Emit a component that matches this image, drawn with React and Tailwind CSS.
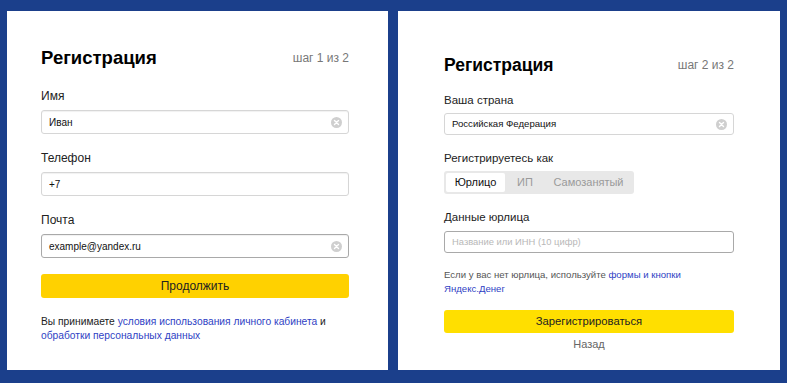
import React from 'react';

const font = { fontFamily: '"Liberation Sans", Arial, sans-serif' };

function ClearIcon() {
    return (
        <svg width="11" height="11" viewBox="0 0 12 12" className="shrink-0">
            <circle cx="6" cy="6" r="6" fill="#cfcfcf" />
            <path d="M3.8 3.8 L8.2 8.2 M8.2 3.8 L3.8 8.2" stroke="#fff" strokeWidth="1.5" strokeLinecap="round" />
        </svg>
    );
}

function Field({ label, value, clear, dark, first }) {
    return (
        <div className={first ? '' : 'mt-[16px]'}>
            <div className="text-[12px] leading-[16px] text-[#222]">{label}</div>
            <div className={`mt-[6px] h-[24px] flex items-center justify-between rounded-[3px] border bg-white pl-[7px] pr-[6px] shadow-[inset_0_1px_1px_rgba(0,0,0,0.06)] ${dark ? 'border-[#a9a9a9]' : 'border-[#d6d6d6]'}`}>
                <span className="text-[10px] text-[#111]">{value}</span>
                {clear && <ClearIcon />}
            </div>
        </div>
    );
}

function StepOne() {
    return (
        <div className="w-[381px] h-[359px] bg-white pt-[35px] pl-[34px] pr-[39px]">
            <div className="h-[24px] flex items-center justify-between">
                <h1 className="text-[18.5px] font-bold text-black">Регистрация</h1>
                <span className="text-[12px] text-[#777]">шаг 1 из 2</span>
            </div>
            <div className="mt-[18px]">
                <Field first label="Имя" value="Иван" clear />
                <Field label="Телефон" value="+7" />
                <Field label="Почта" value="example@yandex.ru" clear dark />
            </div>
            <button className="mt-[16px] w-full h-[24px] rounded-[3px] bg-[#ffd100] text-[12px] text-[#222]">
                Продолжить
            </button>
            <p className="mt-[17px] text-[10.25px] leading-[14px] text-[#222]">
                Вы принимаете <a className="text-[#2f3fc4]">условия использования личного кабинета</a> и{' '}
                <a className="text-[#2f3fc4]">обработки персональных данных</a>
            </p>
        </div>
    );
}

function StepTwo() {
    return (
        <div className="w-[382px] h-[359px] bg-white pt-[42px] pl-[46px] pr-[46px]">
            <div className="h-[24px] flex items-center justify-between">
                <h1 className="text-[17.5px] font-bold text-black">Регистрация</h1>
                <span className="text-[12px] text-[#777]">шаг 2 из 2</span>
            </div>
            <div className="mt-[15px]">
                <div className="text-[11.5px] leading-[16px] text-[#222]">Ваша страна</div>
                <div className="mt-[5px] h-[22px] flex items-center justify-between rounded-[3px] border border-[#d6d6d6] pl-[7px] pr-[6px]">
                    <span className="text-[9.6px] text-[#111]">Российская Федерация</span>
                    <ClearIcon />
                </div>
            </div>
            <div className="mt-[15px]">
                <div className="text-[11.5px] leading-[16px] text-[#222]">Регистрируетесь как</div>
                <div className="mt-[5px] h-[23px] w-[190px] flex items-center rounded-[3px] bg-[#e8e8e8] p-[2px]">
                    <div className="h-full w-[59px] flex items-center justify-center rounded-[2px] bg-white text-[11px] text-[#111]">
                        Юрлицо
                    </div>
                    <div className="h-full w-[40px] flex items-center justify-center text-[11px] text-[#9a9a9a]">ИП</div>
                    <div className="h-full flex-1 flex items-center justify-center text-[11px] text-[#9a9a9a]">
                        Самозанятый
                    </div>
                </div>
            </div>
            <div className="mt-[15px]">
                <div className="text-[11.5px] leading-[16px] text-[#222]">Данные юрлица</div>
                <div className="mt-[6px] h-[22px] flex items-center rounded-[3px] border border-[#a9a9a9] pl-[7px]">
                    <span className="text-[9.4px] text-[#b8b8b8]">Название или ИНН (10 цифр)</span>
                </div>
            </div>
            <p className="mt-[15px] w-[260px] text-[9.6px] leading-[14px] text-[#555]">
                Если у вас нет юрлица, используйте <a className="text-[#2f3fc4]">формы и кнопки Яндекс.Денег</a>
            </p>
            <button className="mt-[14px] w-full h-[23px] rounded-[3px] bg-[#ffdf00] text-[11.25px] text-[#222]">
                Зарегистрироваться
            </button>
            <div className="mt-[3px] text-center text-[11px] leading-[16px] text-[#666]">Назад</div>
        </div>
    );
}

export default function App() {
    return (
        <div style={font} className="w-[787px] h-[383px] bg-[#1b3f8b] flex gap-[10px] pt-[11px] pl-[7px]">
            <StepOne />
            <StepTwo />
        </div>
    );
}
